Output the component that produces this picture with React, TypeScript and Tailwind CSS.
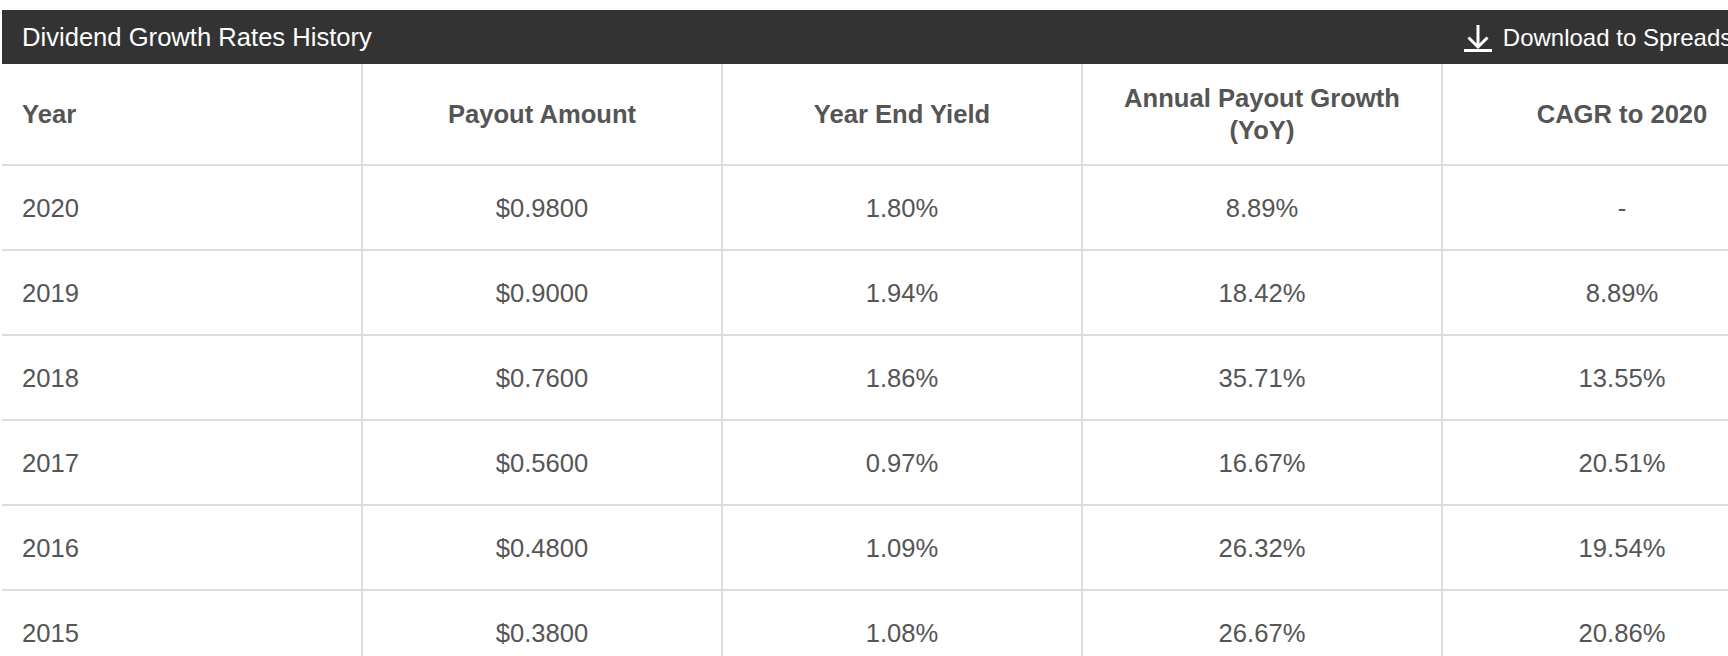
import React from "react";

interface GrowthRow {
  year: string;
  payout: string;
  yieldPct: string;
  growth: string;
  cagr: string;
}

const rows: GrowthRow[] = [
  { year: "2020", payout: "$0.9800", yieldPct: "1.80%", growth: "8.89%", cagr: "-" },
  { year: "2019", payout: "$0.9000", yieldPct: "1.94%", growth: "18.42%", cagr: "8.89%" },
  { year: "2018", payout: "$0.7600", yieldPct: "1.86%", growth: "35.71%", cagr: "13.55%" },
  { year: "2017", payout: "$0.5600", yieldPct: "0.97%", growth: "16.67%", cagr: "20.51%" },
  { year: "2016", payout: "$0.4800", yieldPct: "1.09%", growth: "26.32%", cagr: "19.54%" },
  { year: "2015", payout: "$0.3800", yieldPct: "1.08%", growth: "26.67%", cagr: "20.86%" },
];

const DownloadIcon: React.FC = () => (
  <svg width="28" height="27" viewBox="0 0 28 27" fill="none">
    <path d="M14 0 V22" stroke="white" strokeWidth="3" />
    <path d="M4.5 12.5 L14 22 L23.5 12.5" stroke="white" strokeWidth="3" />
    <rect x="0" y="24" width="28" height="3" fill="white" />
  </svg>
);

const App: React.FC = () => {
  return (
    <div className="h-screen w-full overflow-hidden bg-white">
      <div
        className="w-[1802px] pl-[2px] pt-[10px] text-[25.6px] leading-[32px] text-[#555555]"
        style={{ fontFamily: '"Liberation Sans", Arial, sans-serif' }}
      >
        {/* Barra de título */}
        <div className="flex h-[54px] items-center bg-[#333333] pl-[20px] text-white">
          <span>Dividend Growth Rates History</span>
          <button className="ml-auto mr-[23px] flex items-center gap-[11px] pt-[2px] text-[24px] text-white">
            <DownloadIcon />
            <span className="whitespace-nowrap">Download to Spreadsheet</span>
          </button>
        </div>

        {/* Tabla */}
        <div className="grid grid-cols-[359px_360px_360px_360px_360px]">
          <div className="flex h-[102px] items-center border-b-2 border-[#dddddd] pl-[20px] font-bold">
            Year
          </div>
          <div className="flex h-[102px] items-center justify-center border-b-2 border-l-2 border-[#dddddd] px-[20px] text-center font-bold">
            Payout Amount
          </div>
          <div className="flex h-[102px] items-center justify-center border-b-2 border-l-2 border-[#dddddd] px-[20px] text-center font-bold">
            Year End Yield
          </div>
          <div className="flex h-[102px] items-center justify-center border-b-2 border-l-2 border-[#dddddd] px-[20px] text-center font-bold">
            Annual Payout Growth (YoY)
          </div>
          <div className="flex h-[102px] items-center justify-center border-b-2 border-l-2 border-[#dddddd] px-[20px] text-center font-bold">
            CAGR to 2020
          </div>

          {rows.map((row) => (
            <React.Fragment key={row.year}>
              <div className="flex h-[85px] items-center border-b-2 border-[#dddddd] pl-[20px]">
                {row.year}
              </div>
              <div className="flex h-[85px] items-center justify-center border-b-2 border-l-2 border-[#dddddd]">
                {row.payout}
              </div>
              <div className="flex h-[85px] items-center justify-center border-b-2 border-l-2 border-[#dddddd]">
                {row.yieldPct}
              </div>
              <div className="flex h-[85px] items-center justify-center border-b-2 border-l-2 border-[#dddddd]">
                {row.growth}
              </div>
              <div className="flex h-[85px] items-center justify-center border-b-2 border-l-2 border-[#dddddd]">
                {row.cagr}
              </div>
            </React.Fragment>
          ))}
        </div>
      </div>
    </div>
  );
};

export default App;
